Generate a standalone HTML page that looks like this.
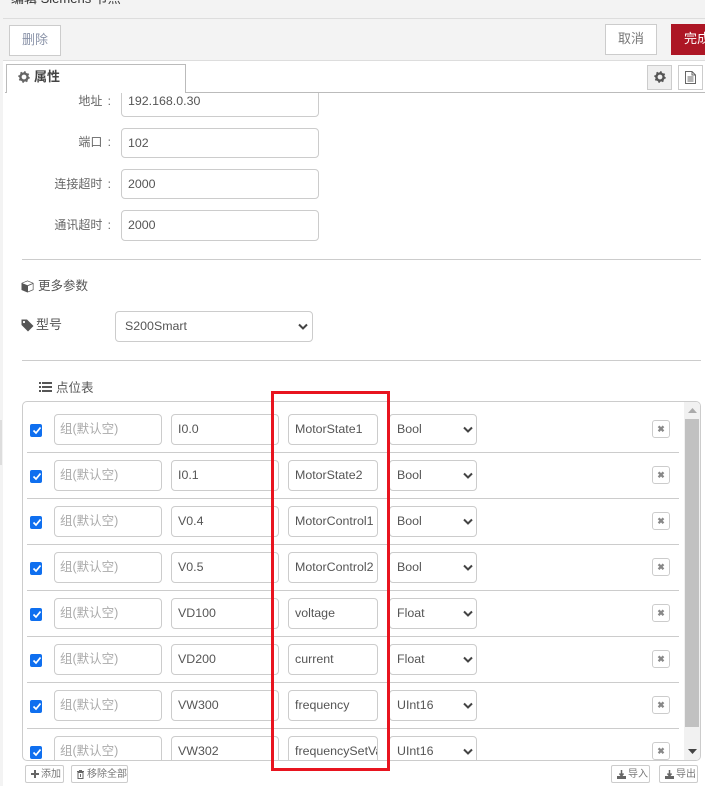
<!DOCTYPE html>
<html><head><meta charset="utf-8"><style>
html,body{margin:0;padding:0;width:705px;height:786px;overflow:hidden;background:#fff}
body{position:relative;font:12.4px "Liberation Sans","Noto Sans CJK SC",sans-serif;color:#555}
div,span,svg{position:absolute;box-sizing:border-box}
.t{white-space:nowrap;line-height:16px}
.i{background:#fff;border:1px solid #ccc;border-radius:4px;height:31px;line-height:28px;white-space:nowrap;overflow:hidden;padding-left:6px;color:#555}
.p{color:#aaa;font-size:12.500px;padding-left:5px}
.s{height:31px;border:1px solid #ccc;border-radius:4px;background:#fff;line-height:28px;padding-left:7px;width:88px;left:389px}
.l{text-align:right;width:80px;left:31px;line-height:16px;font-size:12px;word-spacing:2px;color:#666;white-space:nowrap}
.hr{left:22px;width:679px;height:1px;background:#ccc}
.sep{left:27px;width:652px;height:1px;background:#ccc}
.c{left:30px;width:12px;height:13px;background:#0f6fef;border-radius:2px}
.x{left:652px;width:18px;height:18px;border:1px solid #ccc;border-radius:3px;background:#fff;color:#888;font-size:9px;font-weight:bold;line-height:16px;text-align:center}
.b{height:18px;top:765px;border:1px solid #ccc;border-radius:2px;background:#fff;font-size:10px;line-height:16px;color:#777;white-space:nowrap}
.b span{top:1px}
</style></head><body>
<div style="left:0;top:0;width:705px;height:60px;background:#f3f3f3"></div>
<div style="left:0;top:18px;width:705px;height:1px;background:#ddd"></div>
<div style="left:0;top:60px;width:705px;height:1px;background:#ddd"></div>
<div style="left:0;top:0;width:3px;height:786px;background:#f3f3f3"></div>
<div style="left:0;top:420px;width:2px;height:45px;background:#ddd"></div>
<div class="t" style="left:11px;top:-9px;font-size:13px;color:#333">编辑 Siemens 节点</div>
<div style="left:9px;top:25px;width:52px;height:31px;background:#fff;border:1px solid #ccc;text-align:center;line-height:28px;font-size:13px;color:#8a93a8">删除</div>
<div style="left:605px;top:24px;width:52px;height:31px;background:#fff;border:1px solid #ccc;text-align:center;line-height:28px;font-size:13px;color:#777">取消</div>
<div style="left:671px;top:24px;width:52px;height:31px;background:#ad1625;text-align:center;line-height:29px;font-size:13px;color:#fff">完成</div>

<div class="i" style="left:121px;top:86px;width:198px">192.168.0.30</div>
<div style="left:3px;top:61px;width:702px;height:31px;background:#fff"></div>
<div style="left:5px;top:92px;width:700px;height:1px;background:#bbb"></div>
<div style="left:6px;top:64px;width:180px;height:29px;background:#fff;border:1px solid #bbb;border-bottom:0"></div>
<svg style="left:18px;top:71px" width="12" height="12" viewBox="0 0 12 12"><circle cx="6" cy="6" r="3.6" fill="none" stroke="#666" stroke-width="2.4"/><circle cx="6" cy="6" r="5" fill="none" stroke="#666" stroke-width="1.4" stroke-dasharray="1.8 2.1"/></svg>
<div class="t" style="left:34px;top:69px;font-size:13px;font-weight:bold;color:#444">属性</div>
<div style="left:647px;top:65px;width:25px;height:25px;background:#efefef;border:1px solid #ccc"></div>
<svg style="left:654px;top:71px" width="12" height="12" viewBox="0 0 12 12"><circle cx="6" cy="6" r="3.6" fill="none" stroke="#555" stroke-width="2.4"/><circle cx="6" cy="6" r="5" fill="none" stroke="#555" stroke-width="1.4" stroke-dasharray="1.8 2.1"/></svg>
<div style="left:678px;top:65px;width:25px;height:25px;background:#fff;border:1px solid #ccc"></div>
<svg style="left:685px;top:71px" width="11" height="13" viewBox="0 0 11 13"><path d="M.5.5H7L10.500 4V12.500H.5Z M7 .5V4H10.500 M2.500 6H8.500 M2.500 8H8.500 M2.500 10H8.500" fill="none" stroke="#666"/></svg>

<div class="l" style="top:93px">地址 :</div>
<div class="l" style="top:134px">端口 :</div>
<div class="l" style="top:176px">连接超时 :</div>
<div class="l" style="top:217px">通讯超时 :</div>
<div class="i" style="left:121px;top:128px;width:198px;height:30px">102</div>
<div class="i" style="left:121px;top:169px;width:198px;height:30px">2000</div>
<div class="i" style="left:121px;top:210px;width:198px">2000</div>
<div class="hr" style="top:259px"></div>
<svg style="left:21px;top:280px" width="13" height="13" viewBox="0 0 13 13"><path d="M6.500.5 12.500 3V10L6.500 12.500.5 10V3Z" fill="#555"/><path d="M1.500 3.200 6.500 5.200 11.500 3.200 6.500 1.300Z" fill="#fff"/><path d="M7 6V11.500L11.800 9.500V4Z" fill="#fff"/></svg>
<div class="t" style="left:38px;top:278px;font-size:12.500px">更多参数</div>
<svg style="left:21px;top:319px" width="13" height="13" viewBox="0 0 13 13"><path d="M.5.5H6L12.500 7 7 12.500.5 6Z" fill="#555"/><circle cx="3" cy="3" r="1.100" fill="#fff"/></svg>
<div class="t" style="left:36px;top:317px;font-size:13px">型号</div>
<div class="i" style="left:115px;top:311px;width:198px;padding-left:9px">S200Smart</div>
<svg style="left:298px;top:323px" width="10" height="8" viewBox="0 0 10 8"><path d="M1 1.500 5 5.500 9 1.500" fill="none" stroke="#444" stroke-width="2"/></svg>
<div class="hr" style="top:360px"></div>
<svg style="left:39px;top:382px" width="13" height="10" viewBox="0 0 13 10"><path d="M0 1H2M3 1H13M0 5H2M3 5H13M0 9H2M3 9H13" stroke="#555" stroke-width="2"/></svg>
<div class="t" style="left:56px;top:380px;font-size:12.500px">点位表</div>

<div style="left:22px;top:401px;width:679px;height:360px;border:1px solid #ccc;border-radius:5px;overflow:hidden;background:#fff">
<div style="left:661px;top:0;width:17px;height:358px;background:#f1f1f1"></div>
<div style="left:662px;top:17px;width:14px;height:308px;background:#c1c1c1"></div>
<svg style="left:665px;top:6px" width="9" height="5" viewBox="0 0 9 5"><path d="M4.500 0 9 5H0Z" fill="#aaa"/></svg>
<svg style="left:665px;top:347px" width="9" height="5" viewBox="0 0 9 5"><path d="M0 0H9L4.500 5Z" fill="#444"/></svg>
</div>

<div class="sep" style="top:452px"></div><div class="sep" style="top:498px"></div><div class="sep" style="top:544px"></div><div class="sep" style="top:590px"></div><div class="sep" style="top:636px"></div><div class="sep" style="top:682px"></div><div class="sep" style="top:728px"></div>

<div class="c" style="top:424px"></div><div class="i p" style="left:54px;top:414px;width:108px">组(默认空)</div><div class="i" style="left:171px;top:414px;width:108px">I0.0</div><div class="i" style="left:288px;top:414px;width:90px">MotorState1</div><div class="s" style="top:414px">Bool</div><div class="x" style="top:420px">✖</div>
<div class="c" style="top:470px"></div><div class="i p" style="left:54px;top:460px;width:108px">组(默认空)</div><div class="i" style="left:171px;top:460px;width:108px">I0.1</div><div class="i" style="left:288px;top:460px;width:90px">MotorState2</div><div class="s" style="top:460px">Bool</div><div class="x" style="top:466px">✖</div>
<div class="c" style="top:516px"></div><div class="i p" style="left:54px;top:506px;width:108px">组(默认空)</div><div class="i" style="left:171px;top:506px;width:108px">V0.4</div><div class="i" style="left:288px;top:506px;width:90px">MotorControl1</div><div class="s" style="top:506px">Bool</div><div class="x" style="top:512px">✖</div>
<div class="c" style="top:562px"></div><div class="i p" style="left:54px;top:552px;width:108px">组(默认空)</div><div class="i" style="left:171px;top:552px;width:108px">V0.5</div><div class="i" style="left:288px;top:552px;width:90px">MotorControl2</div><div class="s" style="top:552px">Bool</div><div class="x" style="top:558px">✖</div>
<div class="c" style="top:608px"></div><div class="i p" style="left:54px;top:598px;width:108px">组(默认空)</div><div class="i" style="left:171px;top:598px;width:108px">VD100</div><div class="i" style="left:288px;top:598px;width:90px">voltage</div><div class="s" style="top:598px">Float</div><div class="x" style="top:604px">✖</div>
<div class="c" style="top:654px"></div><div class="i p" style="left:54px;top:644px;width:108px">组(默认空)</div><div class="i" style="left:171px;top:644px;width:108px">VD200</div><div class="i" style="left:288px;top:644px;width:90px">current</div><div class="s" style="top:644px">Float</div><div class="x" style="top:650px">✖</div>
<div class="c" style="top:700px"></div><div class="i p" style="left:54px;top:690px;width:108px">组(默认空)</div><div class="i" style="left:171px;top:690px;width:108px">VW300</div><div class="i" style="left:288px;top:690px;width:90px">frequency</div><div class="s" style="top:690px">UInt16</div><div class="x" style="top:696px">✖</div>
<div class="c" style="top:746px"></div>
<div style="left:23px;top:736px;width:660px;height:24px;overflow:hidden">
<div class="i p" style="left:31px;top:0;width:108px">组(默认空)</div><div class="i" style="left:148px;top:0;width:108px">VW302</div><div class="i" style="left:265px;top:0;width:90px">frequencySetValue</div><div class="s" style="top:0;left:366px">UInt16</div><div class="x" style="top:6px;left:629px">✖</div>
</div>

<svg style="left:33px;top:426px" width="8" height="9" viewBox="0 0 8 9"><path d="M.5 4.500 3 7 7.500 1.500" fill="none" stroke="#fff" stroke-width="1.700"/></svg>
<svg style="left:33px;top:472px" width="8" height="9" viewBox="0 0 8 9"><path d="M.5 4.500 3 7 7.500 1.500" fill="none" stroke="#fff" stroke-width="1.700"/></svg>
<svg style="left:33px;top:518px" width="8" height="9" viewBox="0 0 8 9"><path d="M.5 4.500 3 7 7.500 1.500" fill="none" stroke="#fff" stroke-width="1.700"/></svg>
<svg style="left:33px;top:564px" width="8" height="9" viewBox="0 0 8 9"><path d="M.5 4.500 3 7 7.500 1.500" fill="none" stroke="#fff" stroke-width="1.700"/></svg>
<svg style="left:33px;top:610px" width="8" height="9" viewBox="0 0 8 9"><path d="M.5 4.500 3 7 7.500 1.500" fill="none" stroke="#fff" stroke-width="1.700"/></svg>
<svg style="left:33px;top:656px" width="8" height="9" viewBox="0 0 8 9"><path d="M.5 4.500 3 7 7.500 1.500" fill="none" stroke="#fff" stroke-width="1.700"/></svg>
<svg style="left:33px;top:702px" width="8" height="9" viewBox="0 0 8 9"><path d="M.5 4.500 3 7 7.500 1.500" fill="none" stroke="#fff" stroke-width="1.700"/></svg>
<svg style="left:33px;top:748px" width="8" height="9" viewBox="0 0 8 9"><path d="M.5 4.500 3 7 7.500 1.500" fill="none" stroke="#fff" stroke-width="1.700"/></svg>

<svg style="left:463px;top:426px" width="10" height="8" viewBox="0 0 10 8"><path d="M1 1.500 5 5.500 9 1.500" fill="none" stroke="#444" stroke-width="2"/></svg>
<svg style="left:463px;top:472px" width="10" height="8" viewBox="0 0 10 8"><path d="M1 1.500 5 5.500 9 1.500" fill="none" stroke="#444" stroke-width="2"/></svg>
<svg style="left:463px;top:518px" width="10" height="8" viewBox="0 0 10 8"><path d="M1 1.500 5 5.500 9 1.500" fill="none" stroke="#444" stroke-width="2"/></svg>
<svg style="left:463px;top:564px" width="10" height="8" viewBox="0 0 10 8"><path d="M1 1.500 5 5.500 9 1.500" fill="none" stroke="#444" stroke-width="2"/></svg>
<svg style="left:463px;top:610px" width="10" height="8" viewBox="0 0 10 8"><path d="M1 1.500 5 5.500 9 1.500" fill="none" stroke="#444" stroke-width="2"/></svg>
<svg style="left:463px;top:656px" width="10" height="8" viewBox="0 0 10 8"><path d="M1 1.500 5 5.500 9 1.500" fill="none" stroke="#444" stroke-width="2"/></svg>
<svg style="left:463px;top:702px" width="10" height="8" viewBox="0 0 10 8"><path d="M1 1.500 5 5.500 9 1.500" fill="none" stroke="#444" stroke-width="2"/></svg>
<svg style="left:463px;top:748px" width="10" height="8" viewBox="0 0 10 8"><path d="M1 1.500 5 5.500 9 1.500" fill="none" stroke="#444" stroke-width="2"/></svg>

<div class="b" style="left:25px;width:39px"><svg style="left:5px;top:4px" width="8" height="8" viewBox="0 0 8 8"><path d="M4 0V8M0 4H8" stroke="#666" stroke-width="2"/></svg><span style="left:15px">添加</span></div>
<div class="b" style="left:71px;width:57px"><svg style="left:5px;top:4px" width="7" height="9" viewBox="0 0 7 9"><path d="M1 2.500H6V8.500H1ZM0 1.500H7M2.500 1.500V.5H4.500V1.500M3.500 4V7" fill="none" stroke="#666"/></svg><span style="left:15px">移除全部</span></div>
<div class="b" style="left:611px;width:39px"><svg style="left:5px;top:4px" width="9" height="9" viewBox="0 0 9 9"><path d="M4.500 0V5M2.500 3.500 4.500 6 6.500 3.500" fill="none" stroke="#666" stroke-width="1.500"/><path d="M0 6H9V9H0Z" fill="#666"/></svg><span style="left:16px">导入</span></div>
<div class="b" style="left:659px;width:39px"><svg style="left:5px;top:4px" width="9" height="9" viewBox="0 0 9 9"><path d="M4.500 0V5M2.500 3.500 4.500 6 6.500 3.500" fill="none" stroke="#666" stroke-width="1.500"/><path d="M0 6H9V9H0Z" fill="#666"/></svg><span style="left:16px">导出</span></div>

<div style="left:271px;top:391px;width:119px;height:380px;border:3px solid #e8141f"></div>
</body></html>
